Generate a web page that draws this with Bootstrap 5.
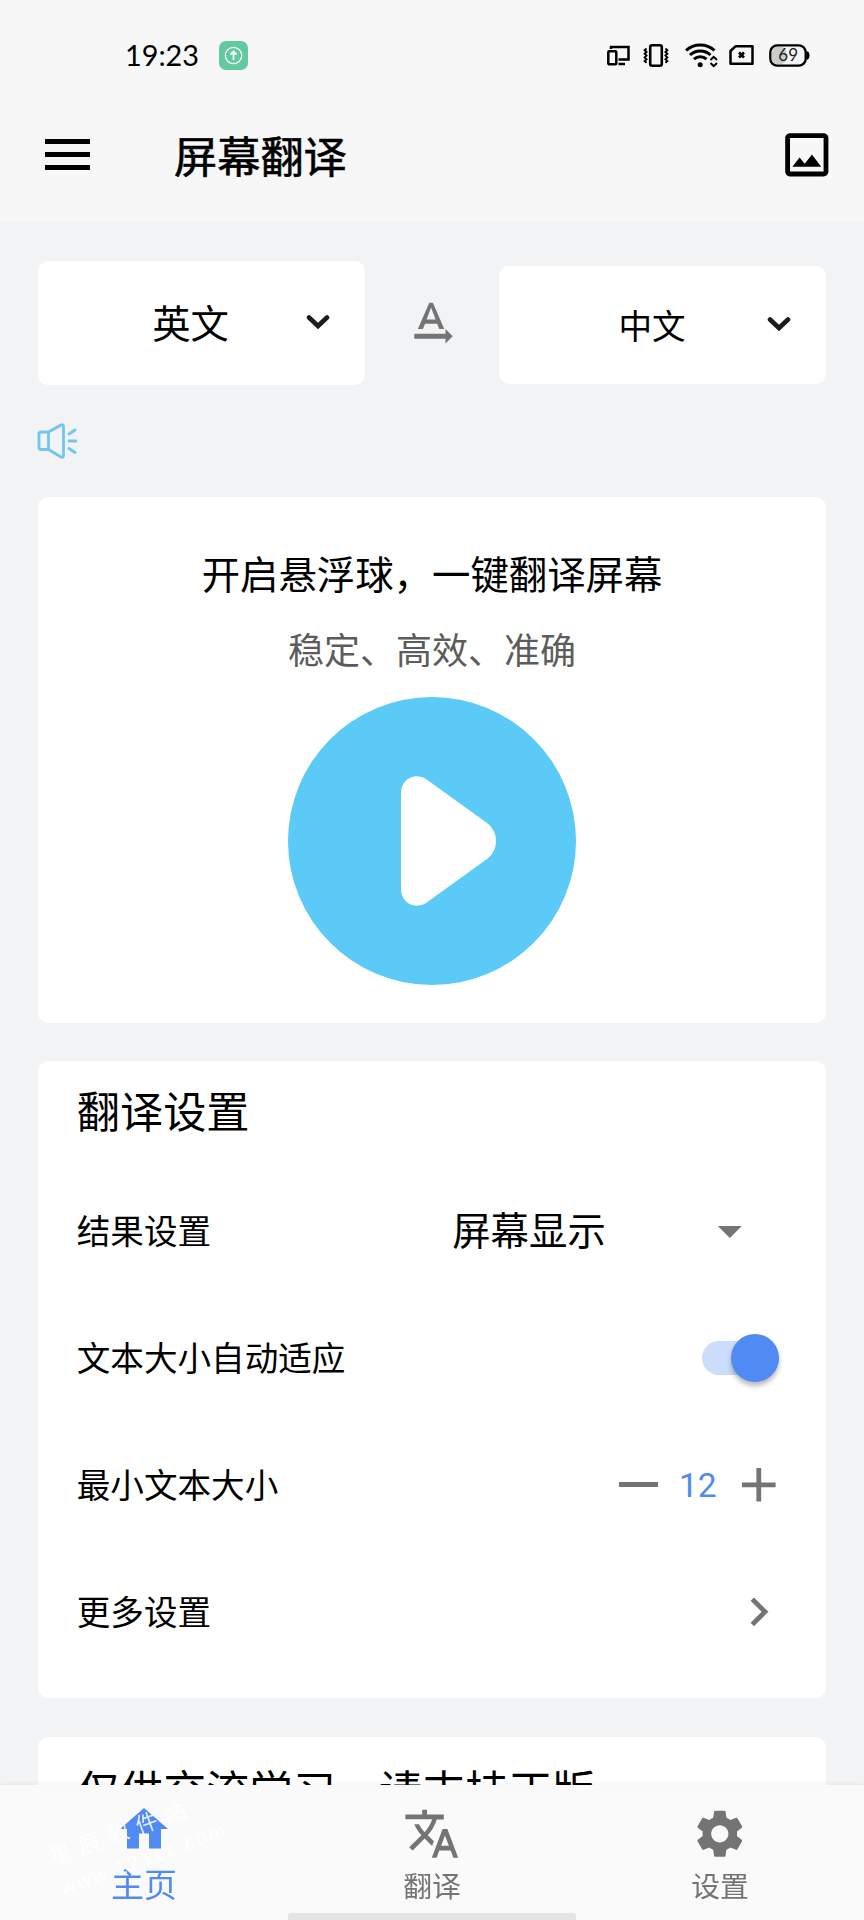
<!DOCTYPE html>
<html lang="zh-CN">
<head>
<meta charset="utf-8">
<meta name="viewport" content="width=device-width, initial-scale=1">
<title>屏幕翻译</title>
<link href="https://cdn.jsdelivr.net/npm/bootstrap@5.3.0/dist/css/bootstrap.min.css" rel="stylesheet">
<style>
  :root { --dp: 2.4px; --blue: #4f8bf2; --sky: #5bcaf7; --grey: #747474; }
  html, body { height: 1920px; overflow: hidden; }
  body { background: #f1f3f5; color: #000; font-family: "Noto Sans CJK SC", sans-serif; font-size: 33.6px; line-height: 1; }
  svg { display: block; flex: none; }
  .ic { width: calc(24 * var(--dp)); height: calc(24 * var(--dp)); fill: var(--grey); }
  .app-head { height: 222px; background: #f7f7f7; }
  .status { height: 110px; padding-left: 125px; padding-right: 54px; }
  .clock { font: 28.8px/30px Lato, sans-serif; width: 94px; }
  .toolbar { height: 90px; padding-left: 45px; padding-right: 28px; }
  .app-title { font-size: 43.2px; line-height: 60px; font-weight: 400; -webkit-text-stroke: .6px #000; margin: -3px 0 0 84px; }
  main { padding: 39px 38.4px 0; }
  .panel { background: #fff; border: 0; border-radius: 10px; }
  .lang { width: 326.6px; padding-right: 35px; }
  .lang span { padding-bottom: 3px; }
  .lang svg { margin-bottom: 2px; }
  .lang-from { height: 124px; font-size: 38.4px; }
  .lang-to { height: 118px; margin-top: 3px; }
  .lang-to span { padding-bottom: 0; }
  .speaker { margin: 38px 0 38px -1px; }
  .hero { height: 526px; padding-top: 50px; }
  .hero-line { font-size: 38.4px; line-height: 50px; }
  .hero-sub { font-size: 36px; line-height: 50px; color: #5c5c5c; margin: 26px 0 24px; }
  .options { height: 637px; margin-top: 38.4px; padding: 0 38.4px; }
  .panel-title { font-size: 43.2px; line-height: 60px; }
  .options .panel-title { padding: 18px 0 28px; }
  .opt { height: 127px; }
  .opt-label { line-height: 48px; padding-bottom: 2px; }
  .result { width: 306px; font-size: 38.4px; margin-right: 29px; }
  .result span { padding-bottom: 5px; }
  .toggle { width: 77px; height: 34px; border-radius: 17px; background: #cbddfb; margin-right: 8px; }
  .knob { width: 48px; height: 48px; border-radius: 50%; background: var(--blue); box-shadow: 0 4px 5px rgba(0,0,0,.27); }
  .num { font-family: Roboto, sans-serif; color: var(--blue); }
  .notice { height: 183px; margin-top: 39px; padding: 21px 38.4px; overflow: hidden; }
  .tabs { height: 135px; background: #fafafa; box-shadow: 0 -1px 5px rgba(0,0,0,.05); color: var(--grey); font-size: 28.8px; }
  .tab-item { flex: 1 0 0; padding-top: 19.5px; }
  .tab-item.on { color: var(--blue); font-size: 33px; }
  .tab-item span { line-height: 45px; }
  .tab-item.on span { line-height: 41px; }
  .home-bar { width: 288px; height: 7px; background: #e4e4e4; border-radius: 3px 3px 0 0; left: 288px; bottom: 0; }
  .stamp { left: 50px; top: 22px; transform: rotate(-20deg); color: rgba(255,255,255,.85); line-height: 36px; white-space: nowrap; pointer-events: none; }
  .stamp-name { font-size: 22px; letter-spacing: 8.5px; }
  .stamp-url { font: 20px/34px "Liberation Sans", sans-serif; letter-spacing: 2.4px; }
</style>
</head>
<body>
<header class="app-head">
  <div class="status d-flex align-items-center">
    <div class="clock">19:23</div>
    <svg width="29" height="29" viewBox="0 0 29 29" fill="none" stroke="#fff"><rect width="29" height="29" rx="7" fill="#63c9a3" stroke="none"/><circle cx="14.5" cy="14.5" r="8.2" stroke-width="1.2"/><path d="M14.5 19v-8M11.500 13.500l3-3 3 3" stroke-width="1.800"/></svg>
    <div class="d-flex align-items-center ms-auto">
      <svg width="23" height="21" viewBox="0 0 23 21" fill="none" stroke="#000" stroke-width="2.500" style="margin-right:13px"><path d="M4 4V2h17.500v12.500H11.500"/><rect x="1.300" y="6.300" width="8" height="13" rx="1"/><path d="M11.500 19h6.500"/></svg>
      <svg width="26" height="23" viewBox="0 0 26 23" fill="none" stroke="#000" style="margin-right:16px"><rect x="7.200" y="1.300" width="11.600" height="20.400" rx="2" stroke-width="2.600"/><path d="M3.500 4.500l-1.800 1.700 1.800 1.800-1.800 1.800 1.800 1.800-1.800 1.800 1.800 1.800-1.800 1.800 1.800 1.700M22.500 4.500l1.800 1.700-1.800 1.800 1.800 1.800-1.800 1.800 1.800 1.800-1.800 1.800 1.800 1.800-1.800 1.700" stroke-width="2"/></svg>
      <svg width="33" height="25" viewBox="0 0 33 25" fill="none" stroke="#000" stroke-width="3" style="margin-right:11px"><path d="M1 7.500a21 21 0 0 1 28.500 0M5 12a15 15 0 0 1 20.500 0M9 16.200a9 9 0 0 1 12.500 0"/><circle cx="15.200" cy="21.800" r="2.500" fill="#000" stroke="none"/><path d="M25.500 17l3.200-3.200L32 17M25.500 20l3.200 3.200L32 20" stroke-width="2"/></svg>
      <svg width="25" height="20" viewBox="0 0 25 20" fill="none" stroke="#000" stroke-width="2.500" style="margin-right:15px"><path d="M6.500 1.300H23.500V18.700H1.500V6z" stroke-linejoin="round"/><path d="M10 7.500l5 5M15 7.500l-5 5" stroke-width="2.600"/></svg>
      <svg width="41" height="23" viewBox="0 0 41 23"><rect x="3" y="3" width="14" height="17" rx="5" fill="#ccc"/><rect x="1.300" y="1.300" width="35.400" height="20.400" rx="7" fill="none" stroke="#000" stroke-width="2.300"/><path d="M37.500 7q3 .8 3 4.500t-3 4.500z"/><text x="19.200" y="17.300" text-anchor="middle" font-family="Lato, sans-serif" font-size="17" fill="#222">69</text></svg>
    </div>
  </div>
  <div class="toolbar d-flex align-items-center">
    <svg width="45" height="31" viewBox="0 0 45 31" style="margin-bottom:1px"><path d="M0 0h45v5H0zM0 13h45v5H0zM0 26h45v5H0z"/></svg>
    <h1 class="app-title">屏幕翻译</h1>
    <svg class="ic ms-auto" style="fill:#000" viewBox="0 0 24 24"><path d="M19 5v14H5V5h14m0-2H5c-1.100 0-2 .9-2 2v14c0 1.100.9 2 2 2h14c1.100 0 2-.9 2-2V5c0-1.100-.9-2-2-2zm-4.860 8.860l-3 3.870L9 13.140 6 17h12l-3.860-5.140z"/></svg>
  </div>
</header>

<main>
  <div class="d-flex justify-content-between align-items-center">
    <div class="card panel lang lang-from flex-row align-items-center justify-content-end">
      <span style="margin-right:77px">英文</span>
      <svg width="24" height="16" viewBox="0 0 24 16" fill="none" stroke="#1c1c1c" stroke-width="4.600"><path d="M3 3.500l9 8.500 9-8.500" stroke-linecap="round"/></svg>
    </div>
    <svg class="ic" viewBox="0 0 24 24"><path d="M21 18l-3-3v2H5v2h13v2l3-3zM9.500 12.800h5l.9 2.200h2.100L12.750 4h-1.500L6.500 15h2.100l.9-2.200zM12 5.980L13.870 11h-3.740L12 5.980z" transform="translate(-.3 -.4)"/></svg>
    <div class="card panel lang lang-to flex-row align-items-center justify-content-end">
      <span style="margin-right:81px">中文</span>
      <svg width="24" height="16" viewBox="0 0 24 16" fill="none" stroke="#1c1c1c" stroke-width="4.600"><path d="M3 3.500l9 8.500 9-8.500" stroke-linecap="round"/></svg>
    </div>
  </div>

  <svg class="speaker" width="40" height="36" viewBox="0 0 40 36" fill="none" stroke="#72c6ee" stroke-width="2.800" stroke-linejoin="round" stroke-linecap="round"><path d="M11.500 9H4Q2 9 2 11v13.500q0 2 2 2h7.500zM11.500 9L24 2q2.500-1 2.500 1.500v29q0 2.500-2.500 1.500l-12.500-7.500M32 11l6-4M32 18h7M32 25.500l6 4"/></svg>

  <section class="card panel hero align-items-center">
    <div class="hero-line">开启悬浮球，一键翻译屏幕</div>
    <div class="hero-sub">稳定、高效、准确</div>
    <svg width="288" height="288" viewBox="0 0 288 288"><circle cx="144" cy="144" r="144" fill="#5bcaf7"/><path d="M113 96c0-14 14-21 25-14l61 44c12 9 12 27 0 36l-61 44c-11 7-25 0-25-14z" fill="#fff"/></svg>
  </section>

  <section class="card panel options">
    <div class="panel-title">翻译设置</div>
    <div class="opt d-flex align-items-center justify-content-between"><span class="opt-label">结果设置</span>
      <div class="result d-flex align-items-center justify-content-between"><span>屏幕显示</span><svg class="ic" viewBox="0 0 24 24"><path d="M7 10l5 5 5-5z"/></svg></div></div>
    <div class="opt d-flex align-items-center justify-content-between"><span class="opt-label">文本大小自动适应</span>
      <div class="toggle d-flex align-items-center justify-content-end"><div class="knob flex-shrink-0"></div></div></div>
    <div class="opt d-flex align-items-center justify-content-between"><span class="opt-label">最小文本大小</span>
      <div class="d-flex align-items-center"><svg width="39" height="5"><path d="M0 0h39v5H0z" fill="#747474"/></svg><span class="num" style="margin:2px 13px 0 21px">12</span><svg class="ic" viewBox="0 0 24 24"><path d="M19 13h-6v6h-2v-6H5v-2h6V5h2v6h6v2z"/></svg></div></div>
    <div class="opt d-flex align-items-center justify-content-between"><span class="opt-label">更多设置</span>
      <svg class="ic" viewBox="0 0 24 24"><path d="M10 6L8.590 7.410 13.170 12l-4.580 4.590L10 18l6-6z"/></svg></div>
  </section>

  <section class="card panel notice"><div class="panel-title">仅供交流学习，请支持正版</div></section>
</main>

<nav class="tabs fixed-bottom d-flex">
  <div class="tab-item on d-flex flex-column align-items-center">
    <svg width="58" height="58" viewBox="0 0 58 58" fill="#4f8bf2"><path d="M29 3L5 24h7V43.500h12V28.500h10v15h12V24h7z"/></svg>
    <span>主页</span>
  </div>
  <div class="tab-item d-flex flex-column align-items-center">
    <svg class="ic" viewBox="0 0 24 24"><path d="M12.870 15.070l-2.540-2.510.03-.03c1.740-1.940 2.980-4.170 3.710-6.530H17V4h-7V2H8v2H1v1.990h11.170C11.500 7.920 10.440 9.750 9 11.350 8.070 10.320 7.300 9.190 6.690 8h-2c.73 1.630 1.730 3.170 2.980 4.560l-5.090 5.020L4 19l5-5 3.110 3.110.76-2.040zM18.500 10h-2L12 22h2l1.120-3h4.750L21 22h2l-4.500-12zm-2.620 7l1.620-4.330L19.120 17h-3.240z"/></svg>
    <span>翻译</span>
  </div>
  <div class="tab-item d-flex flex-column align-items-center">
    <svg class="ic" viewBox="0 0 24 24"><path d="M19.140 12.940c.04-.3.06-.61.06-.94 0-.32-.02-.64-.07-.94l2.030-1.580c.18-.14.23-.41.12-.61l-1.920-3.320c-.12-.22-.37-.29-.59-.22l-2.390.96c-.5-.38-1.030-.7-1.620-.94l-.36-2.540c-.04-.24-.24-.41-.48-.41h-3.840c-.24 0-.43.17-.47.41l-.36 2.540c-.59.24-1.130.57-1.620.94l-2.390-.96c-.22-.08-.47 0-.59.22L2.740 8.870c-.12.21-.08.47.12.61l2.030 1.580c-.05.3-.09.63-.09.94s.02.64.07.94l-2.030 1.580c-.18.14-.23.41-.12.61l1.920 3.320c.12.22.37.29.59.22l2.390-.96c.5.38 1.030.7 1.620.94l.36 2.540c.05.24.24.41.48.41h3.840c.24 0 .44-.17.47-.41l.36-2.540c.59-.24 1.130-.56 1.620-.94l2.390.96c.22.08.47 0 .59-.22l1.920-3.320c.12-.22.07-.47-.12-.61l-2.010-1.580zM12 15.600c-1.980 0-3.600-1.620-3.600-3.600s1.620-3.600 3.600-3.600 3.600 1.620 3.600 3.600-1.620 3.600-3.600 3.600z"/></svg>
    <span>设置</span>
  </div>
  <div class="stamp position-absolute"><div class="stamp-name">星辰软件站</div><div class="stamp-url">www.121xz.com</div></div>
  <div class="home-bar position-absolute"></div>
</nav>
<script src="https://cdn.jsdelivr.net/npm/bootstrap@5.3.0/dist/js/bootstrap.bundle.min.js"></script>
</body>
</html>
